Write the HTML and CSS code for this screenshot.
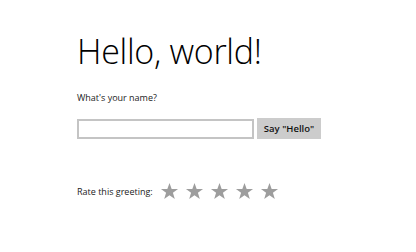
FILE: index.html
```html
<!DOCTYPE html>
<html lang="en">
<head>
    <meta charset="UTF-8">
    <title>Hello, world!</title>
    <link rel="stylesheet" href="styles.css">
</head>
<body>
    <div class="page">
        <h1>Hello, world!</h1>
        <p class="prompt">What's your name?</p>
        <div class="name-row">
            <input type="text" class="name-input">
            <button class="say-btn">Say "Hello"</button>
        </div>
        <div class="rating">
            <span class="rating-label">Rate this greeting:</span>
            <div class="stars">
                <svg class="star" viewBox="0 0 20 20"><polygon points="10,1 12.3,7.4 19,7.4 13.6,11.4 15.6,18 10,14 4.4,18 6.4,11.4 1,7.4 7.7,7.4"/></svg>
                <svg class="star" viewBox="0 0 20 20"><polygon points="10,1 12.3,7.4 19,7.4 13.6,11.4 15.6,18 10,14 4.4,18 6.4,11.4 1,7.4 7.7,7.4"/></svg>
                <svg class="star" viewBox="0 0 20 20"><polygon points="10,1 12.3,7.4 19,7.4 13.6,11.4 15.6,18 10,14 4.4,18 6.4,11.4 1,7.4 7.7,7.4"/></svg>
                <svg class="star" viewBox="0 0 20 20"><polygon points="10,1 12.3,7.4 19,7.4 13.6,11.4 15.6,18 10,14 4.4,18 6.4,11.4 1,7.4 7.7,7.4"/></svg>
                <svg class="star" viewBox="0 0 20 20"><polygon points="10,1 12.3,7.4 19,7.4 13.6,11.4 15.6,18 10,14 4.4,18 6.4,11.4 1,7.4 7.7,7.4"/></svg>
            </div>
        </div>
    </div>
</body>
</html>
```

FILE: styles.css
```css
* {
    margin: 0;
    padding: 0;
    box-sizing: border-box;
    font-family: 'Open Sans', 'Noto Sans', sans-serif;
}

body {
    background-color: #fff;
    color: #000;
}

.page {
    padding: 31px 0 0 77px;
}

.page h1 {
    font-size: 34px;
    font-weight: 300;
    line-height: 40px;
    letter-spacing: -0.3px;
}

.prompt {
    font-size: 9px;
    color: #222;
    margin-top: 20px;
    line-height: 14px;
}

.name-row {
    display: flex;
    align-items: center;
    gap: 3px;
    margin-top: 13px;
}

.name-input {
    width: 177px;
    height: 20px;
    border: 2px solid #c4c4c4;
    background-color: #fff;
    outline: none;
}

.say-btn {
    width: 64px;
    height: 21px;
    border: none;
    background-color: #cccccc;
    color: #111;
    font-size: 9.5px;
    font-weight: 600;
}

.rating {
    display: flex;
    align-items: center;
    gap: 7px;
    margin-top: 43px;
}

.rating-label {
    font-size: 9px;
    color: #222;
}

.stars {
    display: flex;
    gap: 6px;
}

.star {
    width: 19px;
    height: 19px;
    fill: #9d9d9d;
}
```
